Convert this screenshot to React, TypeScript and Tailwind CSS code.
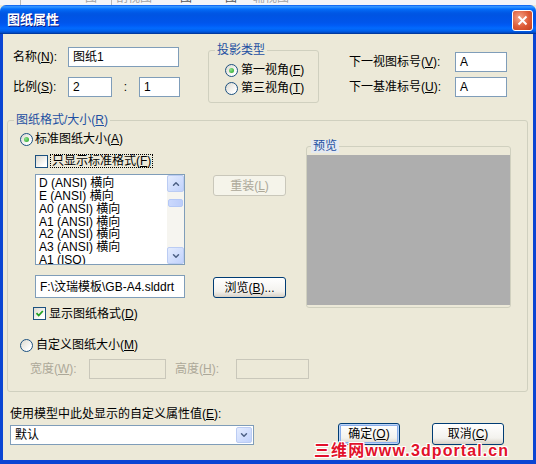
import type { ReactNode } from 'react'
import { ChevronDown, ChevronUp } from 'lucide-react'

const cn = (...c: (string | false | undefined)[]) => c.filter(Boolean).join(' ')

function Field({ className, children }: { className: string; children?: ReactNode }) {
  return (
    <div className={cn('flex items-center border border-[#7F9DB9] bg-white pl-[4px] text-[12px] leading-none text-black', className)}>
      {children}
    </div>
  )
}

function XpButton({
  className,
  children,
  disabled,
  focused,
}: {
  className: string
  children: ReactNode
  disabled?: boolean
  focused?: boolean
}) {
  return (
    <div
      className={cn(
        'flex items-center justify-center rounded-[3px] border text-[12px] leading-none',
        disabled
          ? 'border-[#C9C7BA] bg-[#F5F4EA] text-[#ACA899]'
          : 'border-[#003C74] bg-[linear-gradient(#ffffff,#f3f2ee_70%,#d8d2c7)] text-black',
        focused && 'shadow-[inset_0_0_0_1px_#bcd4f6,inset_0_0_0_2px_#89adeb]',
        className,
      )}
    >
      {children}
    </div>
  )
}

function Radio({ checked }: { checked?: boolean }) {
  return (
    <span className="flex h-[13px] w-[13px] shrink-0 items-center justify-center rounded-full border border-[#1C5180] bg-[linear-gradient(135deg,#dcd9cf,#ffffff_80%)]">
      {checked && <span className="h-[5px] w-[5px] rounded-full bg-[radial-gradient(circle_at_35%_35%,#8be28a,#21a121)]" />}
    </span>
  )
}

function Check({ checked }: { checked?: boolean }) {
  return (
    <span className="flex h-[13px] w-[13px] shrink-0 items-center justify-center border border-[#1C5180] bg-[linear-gradient(135deg,#dcd9cf,#ffffff_80%)]">
      {checked && (
        <svg width="9" height="9" viewBox="0 0 9 9">
          <path d="M1.5 4.2l2.2 2.3L7.8 2" stroke="#21A121" strokeWidth="1.8" fill="none" />
        </svg>
      )}
    </span>
  )
}

function ScrollBtn({ up }: { up?: boolean }) {
  return (
    <div className="flex h-[17px] w-[17px] items-center justify-center rounded-[2px] border border-[#BBCCF3] bg-[linear-gradient(135deg,#e4ecfe,#c1d2fc)]">
      {up ? (
        <ChevronUp className="h-[10px] w-[10px] text-[#4D6185]" strokeWidth={3.5} />
      ) : (
        <ChevronDown className="h-[10px] w-[10px] text-[#4D6185]" strokeWidth={3.5} />
      )}
    </div>
  )
}

const sheets = [
  'D (ANSI) 横向',
  'E (ANSI) 横向',
  'A0 (ANSI) 横向',
  'A1 (ANSI) 横向',
  'A2 (ANSI) 横向',
  'A3 (ANSI) 横向',
  'A1 (ISO)',
]

export default function App() {
  return (
    <div className="relative flex h-[464px] w-[536px] flex-col overflow-hidden bg-[#ECE9D8] font-['Liberation_Sans','Noto_Sans_CJK_SC',sans-serif] text-[12px] text-black">
      {/* strip of the window behind */}
      <div className="h-[5px] overflow-hidden bg-[#F4F5F8]">
        <div className="-mt-[8px] flex h-[13px] items-center text-[12px] leading-[13px] text-[#A3A3A3]">
          <span className="ml-[20px] h-[13px] w-px bg-[#B8B8B8]" />
          <span className="ml-[22px]">—</span>
          <span className="ml-[30px]">图</span>
          <span className="ml-[14px] h-[13px] w-px bg-[#B8B8B8]" />
          <span className="ml-[4px]">剖视图</span>
          <span className="ml-[28px] text-[#555]">图</span>
          <span className="ml-[33px] text-[#555]">图</span>
          <span className="ml-[16px]">辅视图</span>
        </div>
      </div>

      {/* title bar */}
      <div className="flex h-[29px] shrink-0 items-start rounded-t-[6px] bg-[linear-gradient(180deg,#0058EE_0%,#3593FF_5%,#288EFF_8%,#127DFF_11%,#036FFC_14%,#0262EE_20%,#0057E5_28%,#0054E3_35%,#0055EB_60%,#005BF5_70%,#026AFE_80%,#0062EF_88%,#0052D6_94%,#0040AB_97%,#003092_100%)]">
        <span className="mt-[7px] pl-[7px] text-[13px] leading-[15px] font-bold text-white [text-shadow:1px_1px_#0A1883]">
          图纸属性
        </span>
        <div className="mr-[3px] mt-[5px] ml-auto flex h-[21px] w-[21px] items-center justify-center rounded-[3px] border border-white bg-[radial-gradient(circle_at_35%_35%,#F4A48A,#DD5A36_55%,#C2401F)]">
          <svg width="11" height="11" viewBox="0 0 11 11">
            <path d="M1.5 1.5l8 8M9.5 1.5l-8 8" stroke="white" strokeWidth="2" />
          </svg>
        </div>
      </div>

      {/* body */}
      <div className="flex flex-1 flex-col border-x-[3px] border-b-[4px] border-[#0A45D3] pl-[4px]">
        {/* top row */}
        <div className="flex items-start pt-[10px] pl-[6px]">
          <div className="mt-[3px] flex flex-col gap-[10px]">
            <div className="flex h-[20px] items-center">
              <span className="w-[55px]">
                名称(<u>N</u>):
              </span>
              <Field className="h-[20px] w-[111px]">图纸1</Field>
            </div>
            <div className="flex h-[20px] items-center">
              <span className="w-[55px]">
                比例(<u>S</u>):
              </span>
              <Field className="h-[20px] w-[44px]">2</Field>
              <span className="w-[27px] text-center">:</span>
              <Field className="h-[20px] w-[41px]">1</Field>
            </div>
          </div>

          <fieldset className="ml-[28px] h-[59px] w-[111px] rounded-[3px] border border-[#D0D0BF]">
            <legend className="ml-[6px] px-[2px] text-[12px] leading-[13px] text-[#1E50A2]">投影类型</legend>
            <div className="mt-[5px] flex flex-col gap-[2px] pl-[16px]">
              <div className="flex h-[16px] items-center gap-[3px]">
                <Radio checked />
                <span>
                  第一视角(<u>F</u>)
                </span>
              </div>
              <div className="flex h-[16px] items-center gap-[3px]">
                <Radio />
                <span>
                  第三视角(<u>T</u>)
                </span>
              </div>
            </div>
          </fieldset>

          <div className="ml-[30px] mt-[8px] flex flex-col gap-[5px]">
            <div className="flex h-[20px] items-center">
              <span className="w-[106px]">
                下一视图标号(<u>V</u>):
              </span>
              <Field className="h-[20px] w-[52px]">A</Field>
            </div>
            <div className="flex h-[20px] items-center">
              <span className="w-[106px]">
                下一基准标号(<u>U</u>):
              </span>
              <Field className="h-[20px] w-[52px]">A</Field>
            </div>
          </div>
        </div>

        {/* sheet format / size */}
        <fieldset className="mt-[11px] h-[278px] w-[521px] rounded-[3px] border border-[#D0D0BF]">
          <legend className="ml-[6px] px-[2px] text-[12px] leading-[13px] text-[#1E50A2]">
            图纸格式/大小(<u>R</u>)
          </legend>

          <div className="flex items-start">
            <div className="flex w-[278px] flex-col">
              <div className="mt-[4px] flex h-[16px] items-center gap-[2px] pl-[12px]">
                <Radio checked />
                <span>
                  标准图纸大小(<u>A</u>)
                </span>
              </div>
              <div className="mt-[7px] flex h-[14px] items-center gap-[2px] pl-[27px]">
                <Check />
                <span className="border border-dotted border-black px-[1px] leading-[12px]">
                  只显示标准格式(<u>F</u>)
                </span>
              </div>
              <div className="mt-[6px] flex items-start pl-[27px]">
                <div className="flex h-[91px] w-[150px] border border-[#7F9DB9] bg-white">
                  <div className="flex-1 overflow-hidden pt-[2px] pl-[3px] leading-[12.85px]">
                    {sheets.map((s) => (
                      <div key={s} className="whitespace-nowrap">
                        {s}
                      </div>
                    ))}
                  </div>
                  <div className="flex w-[17px] flex-col bg-[#F6F5F0]">
                    <ScrollBtn up />
                    <div className="flex-1 pt-[7px]">
                      <div className="mx-[1px] h-[8px] rounded-[2px] border border-[#B4C8F6] bg-[linear-gradient(90deg,#cad8fd,#bccdfa)]" />
                    </div>
                    <ScrollBtn />
                  </div>
                </div>
                <XpButton disabled className="ml-[28px] mt-[1px] h-[21px] w-[73px]">
                  重装(<u>L</u>)
                </XpButton>
              </div>
              <div className="mt-[10px] flex items-start pl-[27px]">
                <Field className="h-[23px] w-[150px]">F:\汶瑞模板\GB-A4.slddrt</Field>
                <XpButton className="ml-[28px] mt-[2px] h-[21px] w-[73px]">
                  浏览(<u>B</u>)...
                </XpButton>
              </div>
              <div className="mt-[9px] flex h-[13px] items-center gap-[3px] pl-[25px]">
                <Check checked />
                <span>
                  显示图纸格式(<u>D</u>)
                </span>
              </div>
            </div>

            <fieldset className="ml-[20px] mt-[13px] h-[168px] w-[205px] rounded-[3px] border border-[#D0D0BF]">
              <legend className="ml-[4px] bg-[#E4E9F0] px-[2px] text-[12px] leading-[13px] text-[#1E50A2]">预览</legend>
              <div className="mt-[2px] h-[150px] bg-[#AEAEAE]" />
            </fieldset>
          </div>

          <div className="mt-[17px] flex h-[16px] items-center gap-[3px] pl-[12px]">
            <Radio />
            <span>
              自定义图纸大小(<u>M</u>)
            </span>
          </div>
          <div className="mt-[6px] flex h-[20px] items-center pl-[22px] text-[#ACA899]">
            <span className="w-[59px]">
              宽度(<u>W</u>):
            </span>
            <div className="h-[20px] w-[77px] border border-[#C9C7BA] bg-[#ECE9D8]" />
            <span className="ml-[9px] w-[61px]">
              高度(<u>H</u>):
            </span>
            <div className="h-[20px] w-[73px] border border-[#C9C7BA] bg-[#ECE9D8]" />
          </div>
        </fieldset>

        {/* bottom */}
        <div className="mt-[15px] pl-[3px] leading-[14px]">
          使用模型中此处显示的自定义属性值(<u>E</u>):
        </div>
        <div className="mt-[2px] flex items-start pl-[3px]">
          <div className="mt-[2px] flex h-[20px] w-[244px] items-center border border-[#7F9DB9] bg-white pr-[1px] pl-[4px]">
            <span className="flex-1">默认</span>
            <div className="flex h-[16px] w-[16px] items-center justify-center rounded-[2px] border border-[#BBCCF3] bg-[linear-gradient(135deg,#e4ecfe,#c1d2fc)]">
              <ChevronDown className="h-[10px] w-[10px] text-[#4D6185]" strokeWidth={3.5} />
            </div>
          </div>
          <XpButton focused className="ml-[84px] h-[22px] w-[62px]">
            确定(<u>O</u>)
          </XpButton>
          <XpButton className="ml-[32px] h-[22px] w-[72px]">
            取消(<u>C</u>)
          </XpButton>
        </div>
      </div>

      {/* watermark */}
      <div className="absolute top-[443px] left-[314px] text-[16px] leading-[16px] font-bold tracking-[1.1px] text-[#E2112A] [text-shadow:1px_0_#fff,-1px_0_#fff,0_1px_#fff,0_-1px_#fff,1px_1px_#fff,-1px_-1px_#fff,1px_-1px_#fff,-1px_1px_#fff]">
        三维网www.3dportal.cn
      </div>
    </div>
  )
}
